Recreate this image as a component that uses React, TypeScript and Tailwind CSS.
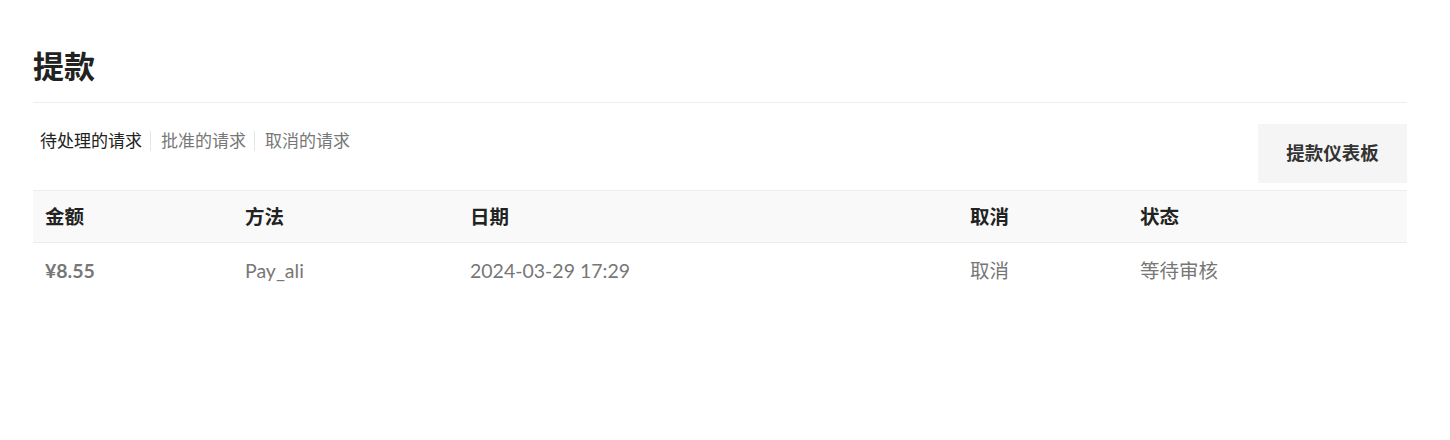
import React from "react";

export default function App() {
  const font = { fontFamily: 'Lato, "Noto Sans CJK SC", sans-serif' };
  return (
    <div className="w-[1450px] h-[440px] bg-white" style={font}>
      <div className="pl-[33px] pr-[43px] pt-[46px]">
        <h1 className="text-[31px] font-bold leading-[40px] text-[#222] pb-[16px] border-b border-[#eeeeee]">提款</h1>
        <div className="flex justify-between items-start pt-[21px] pb-[7px]">
          <div className="flex items-center text-[17px] leading-[20px] pt-[7px] pl-[7px]">
            <span className="text-[#222] pr-[8px] border-r border-[#e5e5e5]">待处理的请求</span>
            <span className="text-[#777] pl-[10px] pr-[8px] border-r border-[#e5e5e5]">批准的请求</span>
            <span className="text-[#777] pl-[10px]">取消的请求</span>
          </div>
          <div className="w-[149px] h-[59px] bg-[#f5f5f5] flex items-center justify-center text-[18.5px] font-bold text-[#333]">提款仪表板</div>
        </div>
        <div className="flex bg-[#f9f9f9] border-y border-[#ececec] h-[53px] items-center text-[19.5px] font-bold text-[#222]">
          <div className="w-[200px] pl-[12px]">金额</div>
          <div className="w-[225px] pl-[12px]">方法</div>
          <div className="w-[500px] pl-[12px]">日期</div>
          <div className="w-[170px] pl-[12px]">取消</div>
          <div className="flex-1 pl-[12px]">状态</div>
        </div>
        <div className="flex h-[55px] items-center text-[19.5px] text-[#777]">
          <div className="w-[200px] pl-[12px] font-bold">¥8.55</div>
          <div className="w-[225px] pl-[12px]">Pay_ali</div>
          <div className="w-[500px] pl-[12px]">2024-03-29 17:29</div>
          <div className="w-[170px] pl-[12px]">取消</div>
          <div className="flex-1 pl-[12px]">等待审核</div>
        </div>
      </div>
    </div>
  );
}
